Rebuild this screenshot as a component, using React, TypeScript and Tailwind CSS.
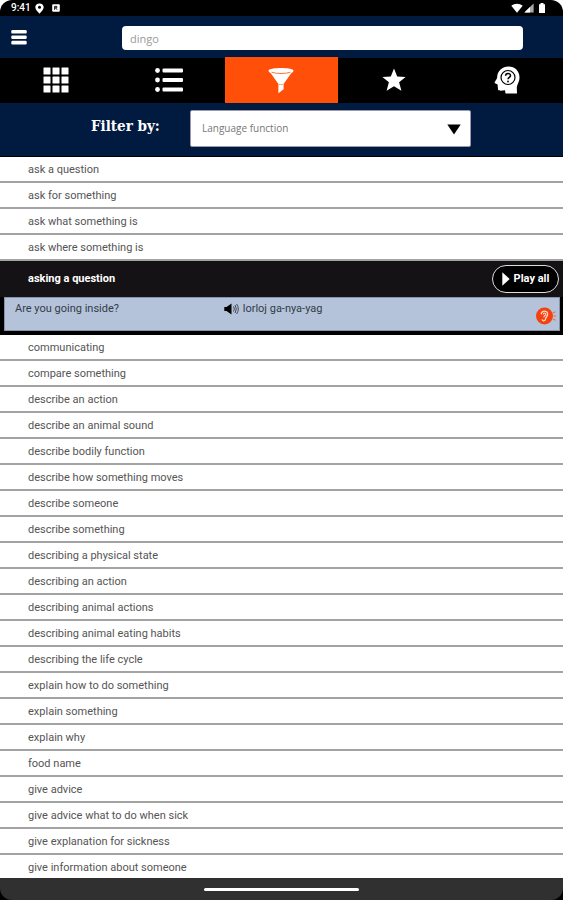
import React, { useState } from 'react';

const BEFORE = [
    'ask a question',
    'ask for something',
    'ask what something is',
    'ask where something is',
];

const AFTER = [
    'communicating',
    'compare something',
    'describe an action',
    'describe an animal sound',
    'describe bodily function',
    'describe how something moves',
    'describe someone',
    'describe something',
    'describing a physical state',
    'describing an action',
    'describing animal actions',
    'describing animal eating habits',
    'describing the life cycle',
    'explain how to do something',
    'explain something',
    'explain why',
    'food name',
    'give advice',
    'give advice what to do when sick',
    'give explanation for sickness',
    'give information about someone',
];

const GridIcon = () => (
    <svg width="26" height="26" viewBox="0 0 26 26" fill="currentColor" aria-hidden="true">
        {[0, 9, 18].map((y) =>
            [0, 9, 18].map((x) => (
                <rect key={`${x}-${y}`} x={x + 0.5} y={y + 0.5} width="7" height="7" rx="0.5" />
            ))
        )}
    </svg>
);

const ListIcon = () => (
    <svg width="28" height="26" viewBox="0 0 28 26" fill="currentColor" aria-hidden="true">
        {[3.5, 13, 22.5].map((y) => (
            <g key={y}>
                <circle cx="2.5" cy={y} r="2.4" />
                <rect x="7.5" y={y - 2} width="20.5" height="4" rx="1" />
            </g>
        ))}
    </svg>
);

const FunnelIcon = () => (
    <svg width="26" height="27" viewBox="0 0 26 27" fill="currentColor" aria-hidden="true">
        <path d="M0.5 3.5C0.5 0 25.5 0 25.5 3.5C25.5 4.6 24.6 5.4 23.4 6L15.6 17V22.2L10.4 26.3V17L2.6 6C1.4 5.4 0.5 4.6 0.5 3.5Z" />
        <path d="M3.5 5.2C8 6.9 18 6.9 22.5 5.2" fill="none" stroke="#ff4f08" strokeWidth="0.8" />
        <path d="M11 17.5H15.2" stroke="#ff4f08" strokeWidth="0.5" />
    </svg>
);

const StarIcon = () => (
    <svg width="24" height="24" viewBox="0 0 24 24" fill="currentColor" aria-hidden="true">
        <path d="M12 0.5L15.2 8.4L23.6 8.9L17.1 14.3L19.4 22.8L12 18.3L4.6 22.8L6.9 14.3L0.4 8.9L8.8 8.4Z" />
    </svg>
);

const HeadIcon = () => (
    <svg width="26" height="28" viewBox="0 0 26 28" fill="currentColor" aria-hidden="true">
        <path d="M14.5 0.5C21 0.5 25.5 5.2 25.5 11.2C25.5 16 23 18.5 22.8 21.5L23 27.5H11.5L11 24.2C8.5 24.5 4.6 25.4 4 23.5L3.6 18.5L0.6 17C0.4 15.6 3.1 13.4 3.2 11C3.4 5 8.4 0.5 14.5 0.5Z" />
        <circle cx="14" cy="11.5" r="7" fill="none" stroke="#000" strokeWidth="1.2" />
        <path d="M11.6 9.8C11.6 6.6 16.6 6.8 16.5 9.6C16.4 11.4 14 11.4 14 13.3" fill="none" stroke="#000" strokeWidth="1.5" />
        <circle cx="14" cy="15.5" r="0.9" fill="#000" />
    </svg>
);

const TABS = [
    { id: 'grid', label: 'Grid', Icon: GridIcon },
    { id: 'list', label: 'List', Icon: ListIcon },
    { id: 'filter', label: 'Filter', Icon: FunnelIcon },
    { id: 'star', label: 'Favourites', Icon: StarIcon },
    { id: 'quiz', label: 'Quiz', Icon: HeadIcon },
];

const StatusBar = () => (
    <div className="bg-white">
        <div className="flex h-4 items-center justify-between rounded-t-xl bg-black pr-[18px] pl-[11px] text-white">
            <div className="flex items-center gap-1">
                <span className="w-5 text-[10px] leading-4 font-medium">9:41</span>
                <svg width="9" height="11" viewBox="0 0 9 11" aria-hidden="true">
                    <path d="M4.5 0.5C7 0.5 8.7 2 8.7 4.3C8.7 7 6 8.6 4.5 10.7C3 8.6 0.3 7 0.3 4.3C0.3 2 2 0.5 4.5 0.5Z" fill="#fff" />
                    <circle cx="4.5" cy="4.2" r="1.5" fill="#000" />
                </svg>
                <svg className="ml-1" width="8" height="8" viewBox="0 0 8 8" aria-hidden="true">
                    <rect x="0.2" y="0.2" width="7.6" height="7.6" rx="1" fill="#fff" />
                    <path d="M2.6 5.8V2.4H4.8V3.8H2.8M3.6 4L5.2 5.8" fill="none" stroke="#000" strokeWidth="0.9" />
                </svg>
            </div>
            <div className="flex items-center gap-px">
                <svg width="12" height="10" viewBox="0 0 12 10" aria-hidden="true">
                    <path d="M6 9.8L0.3 2.8C3.3 0 8.7 0 11.7 2.8Z" fill="#fff" />
                </svg>
                <svg width="10" height="10" viewBox="0 0 10 10" aria-hidden="true">
                    <path d="M9.6 0.4V9.6H0.4Z" fill="#aaa" />
                    <path d="M6 4V9.6H0.4Z" fill="#fff" />
                </svg>
                <svg className="ml-1" width="6" height="10" viewBox="0 0 6 10" aria-hidden="true">
                    <path d="M0 1.2H1.5V0H4.5V1.2H6V10H0Z" fill="#fff" />
                </svg>
            </div>
        </div>
    </div>
);

interface FilterRowProps {
    label: string;
}

const FilterRow: React.FC<FilterRowProps> = ({ label }) => (
    <li>
        <button
            type="button"
            className="block h-[26px] w-full border-b-2 border-[#a3a3a3] bg-white pt-0.5 pl-7 
                text-left text-[11px] leading-[22px] text-[#555]"
        >
            {label}
        </button>
    </li>
);

const OpenRow = () => (
    <li className="bg-black pb-1">
        <div className="flex h-9 items-center justify-between bg-[#151215] pr-1 pl-7">
            <h2 className="text-[11px] font-bold text-white">asking a question</h2>
            <button
                type="button"
                className="flex h-7 w-[67px] items-center justify-center gap-1 rounded-full border 
                    border-[#ddd] bg-black text-[11px] font-bold text-white"
            >
                <svg width="8" height="14" viewBox="0 0 8 14" fill="currentColor" aria-hidden="true">
                    <path d="M0.3 0.3L7.7 7L0.3 13.7Z" />
                </svg>
                Play all
            </button>
        </div>
        <div
            className="mr-[3px] ml-1 flex h-[34px] items-start border border-[#8793a6] bg-[#b4c3da] 
                pt-[3px] pl-2.5 text-[11px] leading-4 text-[#333b47]"
        >
            <p className="w-[38%]">Are you going inside?</p>
            <button type="button" className="flex flex-1 items-center gap-1 pl-0.5 text-left">
                <svg width="15" height="12" viewBox="0 0 15 12" aria-hidden="true">
                    <path d="M0.3 4L2.5 4L7.5 0.5V11.5L2.5 8H0.3Z" fill="#000" />
                    <path d="M9.5 3.5Q11.2 6 9.5 8.5M11 2Q13.6 6 11 10M12.6 1Q16 6 12.6 11" fill="none" stroke="#444b55" strokeWidth="1" />
                </svg>
                lorloj ga-nya-yag
            </button>
            <button type="button" aria-label="Listen" className="mt-1.5 mr-[3px]">
                <svg width="20" height="18" viewBox="0 0 20 18" aria-hidden="true">
                    <circle cx="8.5" cy="9" r="8.5" fill="#f4420f" />
                    <path d="M5.3 7.2C5 3.2 11.6 3 11.6 7C11.6 9.6 9.8 9.8 9.5 12C9.2 14.4 6.4 14.4 6.3 12.2" fill="none" stroke="#ffd6c8" strokeWidth="1.4" />
                    <path d="M7.2 7.4C7.2 5.4 9.8 5.5 9.7 7.3C9.6 8.8 7.8 8.4 8 10.4" fill="none" stroke="#ffd6c8" strokeWidth="1.1" />
                    <path d="M17 5.8L19.6 4.8M17.4 9H20M17 12.2L19.6 13.2" stroke="#f4623a" strokeWidth="1" />
                </svg>
            </button>
        </div>
    </li>
);

export default function App() {
    const [tab, setTab] = useState('filter');

    return (
        <div className="flex h-screen flex-col overflow-hidden bg-black font-['Roboto',sans-serif]">
            <StatusBar />

            <header className="flex h-[42px] shrink-0 items-center bg-[#001a40] pr-10 pl-[11px]">
                <button type="button" aria-label="Menu" className="text-white">
                    <svg width="16" height="16" viewBox="0 0 16 16" fill="currentColor" aria-hidden="true">
                        <rect x="0.3" y="1" width="15.4" height="3.6" rx="1.2" />
                        <rect x="0.3" y="6.4" width="15.4" height="3.6" rx="1.2" />
                        <rect x="0.3" y="11.8" width="15.4" height="3.6" rx="1.2" />
                    </svg>
                </button>
                <input
                    type="search"
                    aria-label="Search"
                    placeholder="dingo"
                    className="mt-0.5 ml-[95px] h-6 min-w-0 flex-1 rounded-[4px] bg-white px-2 
                        font-['Open_Sans',sans-serif] text-[11px] text-[#333] placeholder:text-[#999]"
                />
            </header>

            <nav className="grid h-[45px] shrink-0 grid-cols-5 bg-black text-white">
                {TABS.map(({ id, label, Icon }) => (
                    <button
                        key={id}
                        type="button"
                        aria-label={label}
                        aria-pressed={tab === id}
                        onClick={() => setTab(id)}
                        className={`-mt-px flex items-center justify-center 
                            ${tab === id ? 'bg-[#ff4f08]' : ''}`}
                    >
                        <Icon />
                    </button>
                ))}
            </nav>

            <div className="flex h-[54px] shrink-0 items-center border-b border-black bg-[#001a40] pr-[92px] pb-0.5 pl-[91px]">
                <label
                    htmlFor="filter-by"
                    className="w-[99px] shrink-0 pb-1 font-['DejaVu_Serif_Condensed','DejaVu_Serif',serif] 
                        text-[15px] font-bold text-white"
                >
                    Filter by:
                </label>
                <div className="relative flex-1">
                    <select
                        id="filter-by"
                        defaultValue="function"
                        className="block h-[37px] w-full appearance-none rounded-[2px] border border-[#99a] 
                            bg-white pl-[11px] font-['Open_Sans',sans-serif] text-[10px] text-[#777]"
                    >
                        <option value="function">Language function</option>
                    </select>
                    <svg
                        className="pointer-events-none absolute top-3.5 right-2.5"
                        width="14"
                        height="11"
                        viewBox="0 0 14 11"
                        aria-hidden="true"
                    >
                        <path d="M0.3 0.5H13.7L7 10.5Z" fill="#000" />
                    </svg>
                </div>
            </div>

            <ul className="min-h-0 flex-1 overflow-y-auto bg-white [scrollbar-width:none]">
                {BEFORE.map((label) => (
                    <FilterRow key={label} label={label} />
                ))}
                <OpenRow />
                {AFTER.map((label) => (
                    <FilterRow key={label} label={label} />
                ))}
            </ul>

            <footer className="flex h-[22px] shrink-0 items-center justify-center rounded-b-xl bg-[#303030]">
                <div className="h-[3px] w-[155px] rounded-full bg-white" />
            </footer>
        </div>
    );
}
